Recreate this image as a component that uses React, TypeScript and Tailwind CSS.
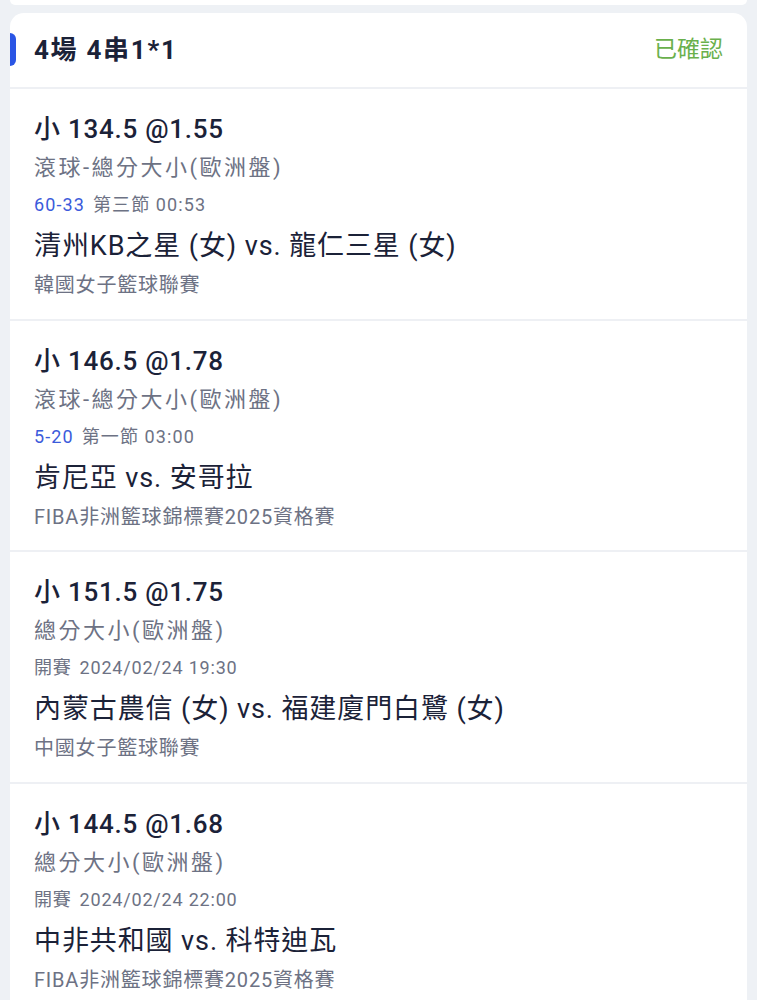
import React from 'react';

// ─── Bet legs ────────────────────────────────────────────────────────────────
type Leg = {
  pick: string;
  market: string;
  score?: string;
  status: string;
  match: string;
  league: string;
};

const legs: Leg[] = [
  {
    pick: '小 134.5 @1.55',
    market: '滾球-總分大小(歐洲盤)',
    score: '60-33',
    status: '第三節 00:53',
    match: '清州KB之星 (女) vs. 龍仁三星 (女)',
    league: '韓國女子籃球聯賽',
  },
  {
    pick: '小 146.5 @1.78',
    market: '滾球-總分大小(歐洲盤)',
    score: '5-20',
    status: '第一節 03:00',
    match: '肯尼亞 vs. 安哥拉',
    league: 'FIBA非洲籃球錦標賽2025資格賽',
  },
  {
    pick: '小 151.5 @1.75',
    market: '總分大小(歐洲盤)',
    status: '2024/02/24 19:30',
    match: '內蒙古農信 (女) vs. 福建廈門白鷺 (女)',
    league: '中國女子籃球聯賽',
  },
  {
    pick: '小 144.5 @1.68',
    market: '總分大小(歐洲盤)',
    status: '2024/02/24 22:00',
    match: '中非共和國 vs. 科特迪瓦',
    league: 'FIBA非洲籃球錦標賽2025資格賽',
  },
];

const font = "font-['Roboto','Noto_Sans_CJK_TC',sans-serif]";

function LegRow({ leg }: { leg: Leg }) {
  return (
    <div className="flex flex-col px-6 pt-5 pb-[17.5px] border-t-2 border-[#eef0f4]">
      <div className="text-[26px] leading-[40px] font-medium tracking-[0.75px] text-[#1b2238]">{leg.pick}</div>
      <div className="text-[22px] leading-[38px] tracking-[2.5px] text-[#6d7284]">{leg.market}</div>
      {leg.score ? (
        <div className="text-[18px] leading-[36px] tracking-[1.1px] text-[#6d7284] flex gap-[8px]">
          <span className="text-[#3b5bdb]">{leg.score}</span>
          <span>{leg.status}</span>
        </div>
      ) : (
        <div className="text-[18px] leading-[36px] tracking-[0.8px] text-[#6d7284] flex gap-[8px]">
          <span>開賽</span>
          <span>{leg.status}</span>
        </div>
      )}
      <div className="text-[27px] leading-[46px] tracking-[0.9px] text-[#1b2238]">{leg.match}</div>
      <div className="text-[20px] leading-[32px] tracking-[0.8px] text-[#6d7284]">{leg.league}</div>
    </div>
  );
}

export default function App() {
  return (
    <div className={`min-h-screen bg-[#eef1f5] px-[10px] ${font}`}>
      {/* previous card peeking from the top */}
      <div className="h-[5px] bg-white rounded-b-[14px]" />

      <div className="mt-2 bg-white rounded-t-[14px] overflow-hidden">
        {/* header */}
        <div className="relative h-[74px] flex items-center justify-between pl-6 pr-6">
          <span className="absolute left-0 top-[20px] h-[33px] w-[6px] rounded-r-full bg-[#2a55e5]" />
          <span className="text-[26px] font-bold text-[#1b2238] tracking-[1.7px]">4場 4串1*1</span>
          <span className="text-[23px] text-[#6ab04c]">已確認</span>
        </div>

        {legs.map((leg, i) => (
          <LegRow key={i} leg={leg} />
        ))}
      </div>
    </div>
  );
}
